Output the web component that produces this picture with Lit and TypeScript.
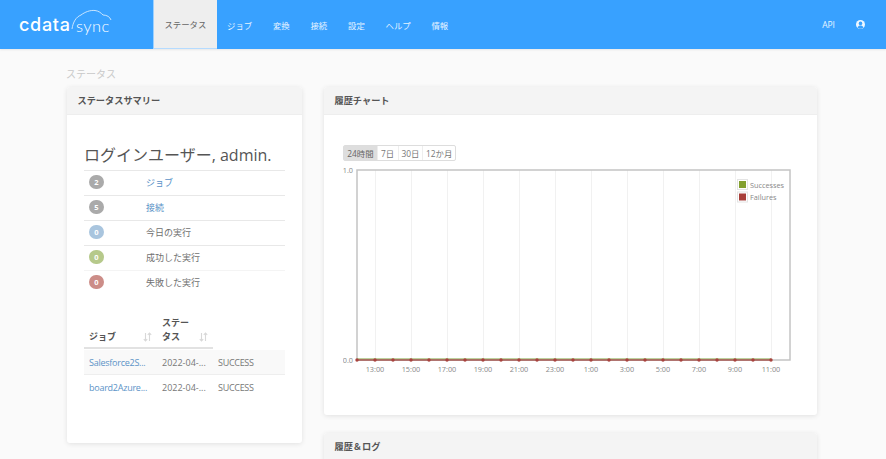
import { LitElement, html, css, svg } from "lit";
import { customElement } from "lit/decorators.js";

@customElement("app-root")
export class AppRoot extends LitElement {
  static styles = css`
    :host { display: block; height: 459px; overflow: hidden; background: #fafafa; font-family: "Open Sans", "Noto Sans CJK JP", sans-serif; color: #555; }
    .top { height: 49px; background: #38a1ff; display: flex; align-items: stretch; box-shadow: 0 1px 2px rgba(0,0,0,.08); position: relative; }
    .logo { width: 154px; box-sizing: border-box; padding-left: 19px; display: flex; align-items: center; color: #fff; position: relative; }
    .logo .c { font: 500 18px "Inter", sans-serif; letter-spacing: .7px; width: 57px; }
    .logo .s { font: 300 16.5px "Lato", sans-serif; letter-spacing: .4px; margin-top: 2px; }
    .cloud { position: absolute; left: 70px; top: 8px; width: 44px; height: 26px; }
    nav { display: flex; font-size: 8.4px; color: #e6f3ff; }
    nav a { padding: 0 10.4px; display: flex; align-items: center; }
    nav a.on { background: #eee; color: #666; border-left: 1px solid #9cd0ff; margin-left: -1px; border-bottom: 1px solid #b5dbff; }
    .right { margin-left: auto; display: flex; align-items: center; padding-right: 21px; color: #eaf5ff; font-size: 8.5px; gap: 21px; }
    .right svg { width: 9px; height: 9px; display: block; }
    .crumb { margin: 19px 0 0 66px; font-size: 10px; line-height: 13px; color: #c9c9c9; height: 13px; }
    .cols { display: grid; grid-template-columns: 235px 493px; gap: 22px; margin: 6px 0 0 67px; align-items: start; }
    .stack { display: flex; flex-direction: column; gap: 18px; }
    .card { background: #fff; border-radius: 3px; box-shadow: 0 1px 5px rgba(0,0,0,.10); overflow: hidden; }
    .hd { height: 28px; box-sizing: border-box; background: #f4f4f4; border-bottom: 1px solid #eee; padding: 0 10.500px 2px; display: flex; align-items: center; font-size: 9.2px; font-weight: 700; color: #555; }
    .left { height: 356px; box-sizing: border-box; }
    .left .bd { padding: 27px 17px 0; }
    h2 { margin: 0; font-size: 16px; line-height: 27px; font-weight: 400; color: #555; white-space: nowrap; height: 28px; }
    .row { height: 25px; box-sizing: border-box; border-top: 1px solid #e8e8e8; display: flex; align-items: center; font-size: 9px; color: #707070; padding: 0 0 2px 5px; }
    .row.last { border-top-color: #f4f4f4; }
    .badge { width: 15px; height: 14px; border-radius: 7px; color: #fff; font-size: 7.5px; font-weight: 700; display: flex; align-items: center; justify-content: center; margin-right: 42px; }
    .link { color: #5b93c7; }
    .gray { background: #aaa; } .blue { background: #a9c5de; } .green { background: #b6c98b; } .red { background: #cc8d88; }
    .tbl { margin-top: 11px; font-size: 9px; color: #777; }
    .thead { display: grid; grid-template-columns: 73px 56px; width: 129px; border-bottom: 2px solid #e2e2e2; box-sizing: border-box; height: 43px; font-weight: 700; color: #555; line-height: 14px; }
    .th { padding: 0 5px 3px; display: flex; align-items: flex-end; justify-content: space-between; box-sizing: border-box; }
    .th span { display: block; }
    .th svg { width: 9px; height: 10px; margin: 0 0 2px 0; display: block; }
    .tr { display: grid; grid-template-columns: 73px 56px 1fr; height: 25px; align-items: center; padding-left: 5px; border-bottom: 1px solid #eee; box-sizing: border-box; white-space: nowrap; }
    .tr .link { letter-spacing: -.25px; }
    .tr .st { letter-spacing: -.3px; }
    .tr.odd { background: #f9f9f9; margin-top: 1px; }
    .tr.even { border-bottom: none; }
    .chart { height: 328px; box-sizing: border-box; }
    .chart .bd { padding: 30px 0 0 19px; position: relative; }
    .btns { display: flex; width: 113px; height: 16px; border: 1px solid #ddd; border-radius: 2px; font-size: 8.4px; color: #777; box-sizing: border-box; }
    .btns span { display: flex; align-items: center; justify-content: center; border-left: 1px solid #eee; box-sizing: border-box; }
    .btns span:first-child { border-left: none; background: #dedede; color: #666; }
    .w33 { width: 33px; } .w21 { width: 21px; } .w25 { width: 25px; }
    .plot { display: block; margin: 1px 0 0; }
    .plot text { font-family: "Open Sans", "Noto Sans CJK JP", sans-serif; font-size: 7.3px; fill: #888; }
    .short { height: 60px; }
  `;

  render() {
    const pts = Array.from({ length: 24 }, (_, i) => i);
    const labels = ["13:00","15:00","17:00","19:00","21:00","23:00","1:00","3:00","5:00","7:00","9:00","11:00"];
    const ox = 14, top = 8, bot = 198;
    const sort = html`<svg viewBox="0 0 9 10"><path d="M2.5 1v8M.8 7.2 2.500 9l1.700-1.800M6.500 9V1M4.800 2.800 6.500 1l1.700 1.800" fill="none" stroke="#d8d8d8" stroke-width="1.1"/></svg>`;
    return html`
      <div class="top">
        <div class="logo">
          <span class="c">cdata</span><span class="s">sync</span>
          <svg class="cloud" viewBox="0 0 44 26" fill="none" stroke="#d7ecff" stroke-width=".9">
            <path d="M2 21C3 14 6 9 11 7 15 4 20 2 25 2.500 29 3 31 5 33 7 37 7 40 9 41 12"/>
          </svg>
        </div>
        <nav>
          <a class="on">ステータス</a><a>ジョブ</a><a>変換</a><a>接続</a><a>設定</a><a>ヘルプ</a><a>情報</a>
        </nav>
        <div class="right">
          <span>API</span>
          <svg viewBox="0 0 10 10"><circle cx="5" cy="5" r="5" fill="#eef7ff"/><circle cx="5" cy="3.8" r="2" fill="#38a1ff"/><path d="M1.6 8.4C2.2 6.6 3.6 6 5 6s2.8.6 3.4 2.4C7.5 9.4 6.2 9.8 5 9.8S2.500 9.400 1.600 8.400Z" fill="#38a1ff"/></svg>
        </div>
      </div>
      <div class="crumb">ステータス</div>
      <div class="cols">
        <section class="card left">
          <div class="hd">ステータスサマリー</div>
          <div class="bd">
            <h2>ログインユーザー, admin.</h2>
            <div class="row"><span class="badge gray">2</span><span class="link">ジョブ</span></div>
            <div class="row"><span class="badge gray">5</span><span class="link">接続</span></div>
            <div class="row"><span class="badge blue">0</span>今日の実行</div>
            <div class="row"><span class="badge green">0</span>成功した実行</div>
            <div class="row last"><span class="badge red">0</span>失敗した実行</div>
            <div class="tbl">
              <div class="thead">
                <div class="th"><span>ジョブ</span>${sort}</div>
                <div class="th"><span>ステー<br />タス</span>${sort}</div>
              </div>
              <div class="tr odd"><span class="link">Salesforce2S...</span><span>2022-04-...</span><span class="st">SUCCESS</span></div>
              <div class="tr even"><span class="link">board2Azure...</span><span>2022-04-...</span><span class="st">SUCCESS</span></div>
            </div>
          </div>
        </section>
        <div class="stack">
          <section class="card chart">
            <div class="hd">履歴チャート</div>
            <div class="bd">
              <div class="btns">
                <span class="w33">24時間</span><span class="w21">7日</span><span class="w25">30日</span><span class="w33">12か月</span>
              </div>
              <svg class="plot" width="474" height="224" viewBox="0 0 474 224">
                ${labels.map((_, i) => svg`<line x1=${ox + 18.5 + i * 36} x2=${ox + 18.5 + i * 36} y1=${top} y2=${bot} stroke="#f1f1f1" stroke-width="1"/>`)}
                <rect x=${ox} y=${top} width="433" height=${bot - top} fill="none" stroke="#c4c4c4" stroke-width="1.5"/>
                <line x1=${ox} x2=${ox + 414} y1=${bot - 1} y2=${bot - 1} stroke="#a9c27f" stroke-width="1.5"/>
                <line x1=${ox} x2=${ox + 414} y1=${bot} y2=${bot} stroke="#a5544f" stroke-width="1.3"/>
                ${pts.map((i) => svg`<circle cx=${ox + i * 18} cy=${bot} r="1.7" fill="#a8423d"/>`)}
                <text x="10" y=${top + 2.500} text-anchor="end">1.0</text>
                <text x="10" y=${bot + 2.500} text-anchor="end">0.0</text>
                ${labels.map((l, i) => svg`<text x=${ox + 18 + i * 36} y=${bot + 11.500} text-anchor="middle">${l}</text>`)}
                <rect x="394.500" y="17.500" width="10" height="10" fill="#fff" stroke="#e4e4e4"/>
                <rect x="396" y="19" width="7" height="7" fill="#83a02f"/>
                <rect x="394.500" y="30" width="10" height="10" fill="#fff" stroke="#e4e4e4"/>
                <rect x="396" y="31.500" width="7" height="7" fill="#a83f3a"/>
                <text x="407" y="25.500">Successes</text>
                <text x="407" y="37.500">Failures</text>
              </svg>
            </div>
          </section>
          <section class="card short"><div class="hd">履歴＆ログ</div></section>
        </div>
      </div>
    `;
  }
}
